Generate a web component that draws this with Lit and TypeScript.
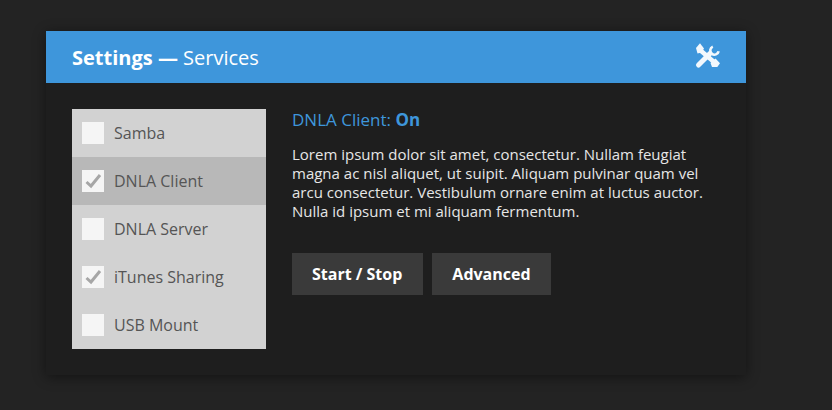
import { LitElement, html, css, svg } from "lit";
import { customElement } from "lit/decorators.js";

const items = [
  { name: "Samba", checked: false, active: false },
  { name: "DNLA Client", checked: true, active: true },
  { name: "DNLA Server", checked: false, active: false },
  { name: "iTunes Sharing", checked: true, active: false },
  { name: "USB Mount", checked: false, active: false },
];

const check = svg`<path d="M4.5 12 L9 16 L18 5" fill="none" stroke="#a6a6a6" stroke-width="3"/>`;

@customElement("app-root")
export class AppRoot extends LitElement {
  static styles = css`
    :host {
      display: block;
      width: 832px;
      height: 410px;
      background: #232323;
      font-family: "Open Sans", sans-serif;
      overflow: hidden;
      padding: 31px 0 0 46px;
      box-sizing: border-box;
    }
    .panel {
      width: 700px;
      height: 344px;
      background: #1e1e1e;
      box-shadow: 0 2px 12px rgba(0, 0, 0, 0.45);
    }
    .head {
      height: 52px;
      background: #3e96db;
      color: #fff;
      display: flex;
      align-items: center;
      justify-content: space-between;
      padding: 0 26px;
      font-size: 20px;
    }
    .head b { font-weight: 700; }
    .head svg { display: block; }
    .body {
      display: flex;
      padding: 26px;
      gap: 26px;
    }
    .list {
      width: 194px;
      flex: none;
      background: #d2d2d2;
    }
    .row {
      height: 48px;
      display: flex;
      align-items: center;
      padding-left: 10px;
      gap: 10px;
      font-size: 16px;
      color: #555;
    }
    .row.active { background: #b8b8b8; }
    .box {
      width: 22px;
      height: 22px;
      background: #f5f5f5;
      flex: none;
    }
    .box svg { display: block; }
    .main { flex: 1; }
    h2 {
      margin: 0;
      font-size: 17px;
      font-weight: 400;
      line-height: 22px;
      color: #3e96db;
    }
    h2 b { font-weight: 700; }
    p {
      margin: 14px 0 0;
      font-size: 15px;
      line-height: 19px;
      color: #e6e6e6;
    }
    .btns {
      display: flex;
      gap: 9px;
      margin-top: 32px;
    }
    .btn {
      height: 42px;
      display: flex;
      align-items: center;
      background: #3a3a3a;
      color: #fff;
      font-size: 16px;
      font-weight: 700;
      padding: 0 20px;
    }
    .btn:first-child { padding-right: 21px; }
  `;

  render() {
    return html`
      <div class="panel">
        <div class="head">
          <div><b>Settings —</b> Services</div>
          <svg width="26" height="28" viewBox="0 0 26 28">
            <path d="M6 0.3 L2 5 L3.5 10.5 L7.5 9.5 L10 5.5 Z" fill="#f2f8fd"/>
            <path d="M6 7 L20 19" fill="none" stroke="#f2f8fd" stroke-width="4.4"/>
            <path d="M16.5 20 L21.5 15.5 L26 20.3 L23.3 24 L18 24 Z" fill="#f2f8fd"/>
            <path d="M4.5 22 L16 10.5" fill="none" stroke="#f2f8fd" stroke-width="5" stroke-linecap="round"/>
            <path d="M18.8 3.6 A4.2 4.2 0 1 0 24.6 8.2" fill="none" stroke="#f2f8fd" stroke-width="2.6"/>
          </svg>
        </div>
        <div class="body">
          <div class="list">
            ${items.map(
              (i) => html`<div class="row ${i.active ? "active" : ""}">
                <div class="box">${i.checked ? html`<svg width="22" height="22" viewBox="0 0 22 22">${check}</svg>` : ""}</div>
                <span>${i.name}</span>
              </div>`
            )}
          </div>
          <div class="main">
            <h2>DNLA Client: <b>On</b></h2>
            <p>Lorem ipsum dolor sit amet, consectetur. Nullam feugiat<br />magna ac nisl aliquet, ut suipit. Aliquam pulvinar quam vel<br />arcu consectetur. Vestibulum ornare enim at luctus auctor.<br />Nulla id ipsum et mi aliquam fermentum.</p>
            <div class="btns">
              <div class="btn">Start / Stop</div>
              <div class="btn">Advanced</div>
            </div>
          </div>
        </div>
      </div>
    `;
  }
}
